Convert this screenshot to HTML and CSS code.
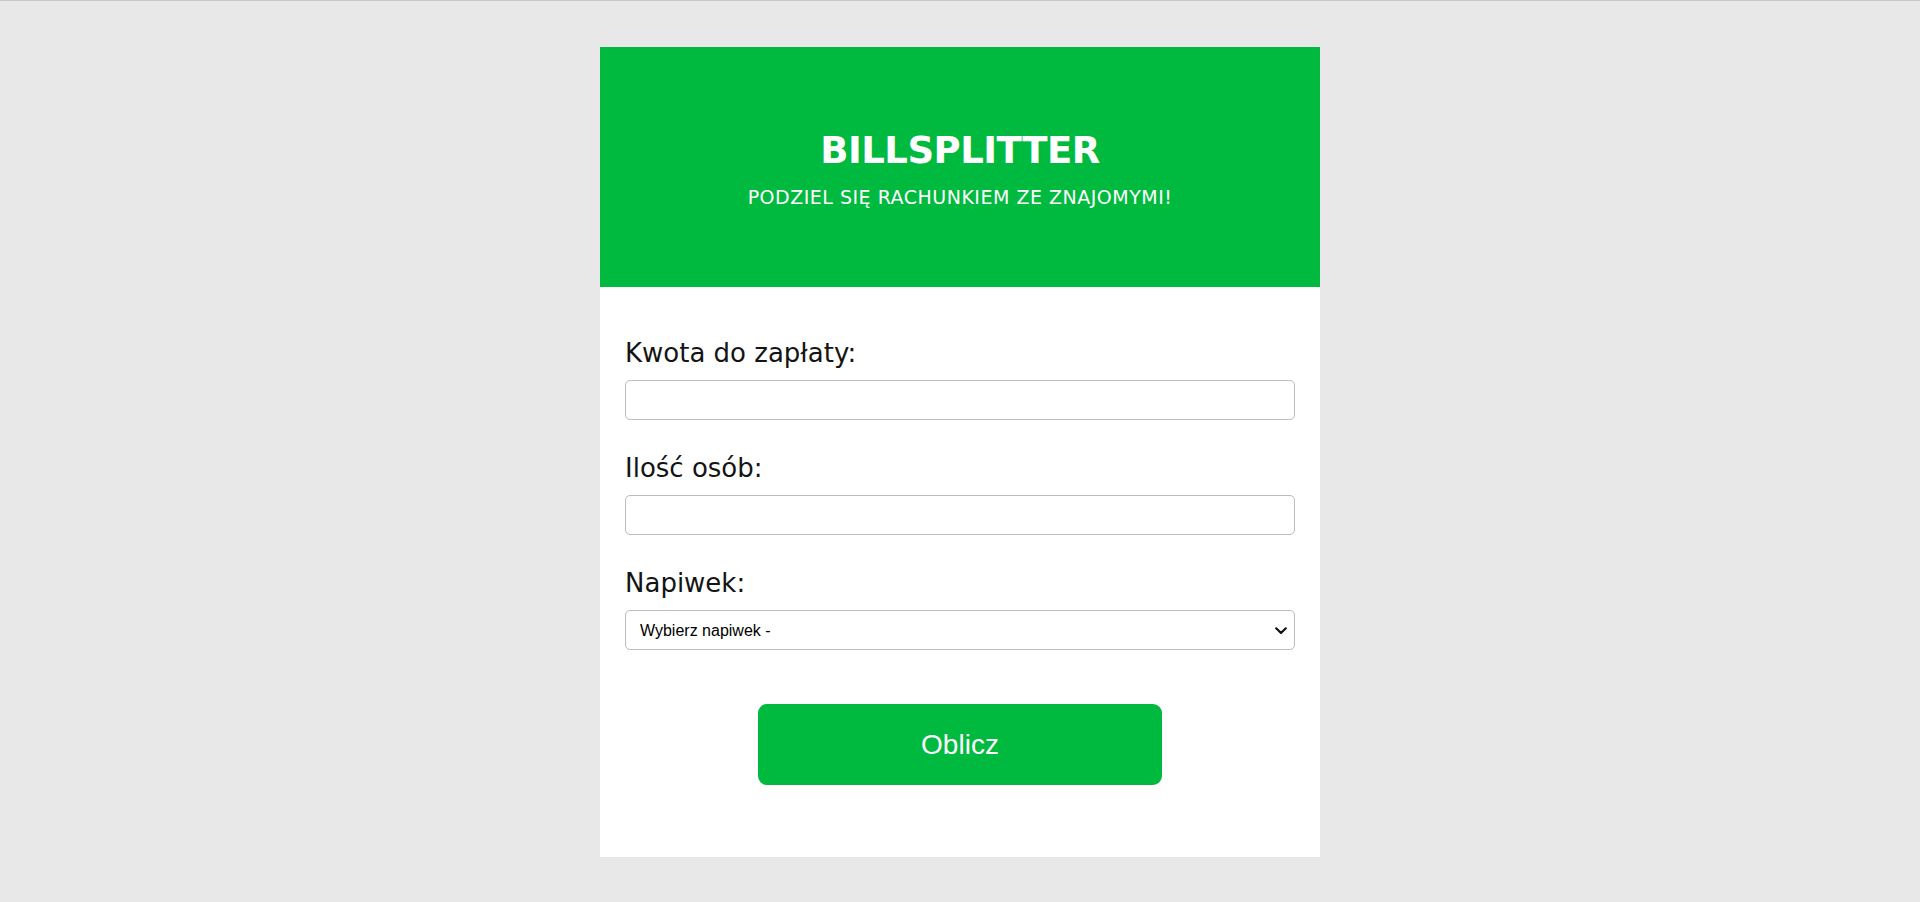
FILE: index.html
```html
<!DOCTYPE html>
<html lang="pl">
<head>
<meta charset="utf-8">
<title>Billsplitter</title>
<link rel="stylesheet" href="styles.css">
</head>
<body>
<main class="card">
  <header class="card-header">
    <h1 class="title">BILLSPLITTER</h1>
    <p class="subtitle">PODZIEL SIĘ RACHUNKIEM ZE ZNAJOMYMI!</p>
  </header>
  <form class="card-body">
    <div class="field">
      <label class="label" for="price">Kwota do zapłaty:</label>
      <input class="control" id="price" type="text">
    </div>
    <div class="field">
      <label class="label" for="people">Ilość osób:</label>
      <input class="control" id="people" type="text">
    </div>
    <div class="field">
      <label class="label" for="tip">Napiwek:</label>
      <div class="select-wrap">
        <select class="control select" id="tip">
          <option>Wybierz napiwek -</option>
          <option>5%</option>
          <option>10%</option>
          <option>15%</option>
        </select>
        <svg class="chevron" width="12" height="8" viewBox="0 0 12 8" aria-hidden="true">
          <path d="M1.2 1.3 L6 6 L10.8 1.3" fill="none" stroke="#111" stroke-width="2.2" stroke-linecap="round" stroke-linejoin="round"/>
        </svg>
      </div>
    </div>
    <div class="actions">
      <button class="btn" type="button">Oblicz</button>
    </div>
  </form>
</main>
</body>
</html>
```

FILE: styles.css
```css
* { box-sizing: border-box; }

html, body { height: 100%; }

body {
  margin: 0;
  background: #e8e8e8;
  border-top: 1px solid #c6c6c6;
  font-family: "DejaVu Sans", "Noto Sans", sans-serif;
}

.card {
  width: 720px;
  margin: 46px auto 0;
  background: #ffffff;
}

.card-header {
  height: 240px;
  padding-top: 3px;
  background: #00ba3f;
  color: #ffffff;
  display: flex;
  flex-direction: column;
  align-items: center;
  justify-content: center;
  gap: 14px;
}

.title {
  margin: 0;
  font-size: 37px;
  font-weight: 700;
  letter-spacing: -0.5px;
  line-height: normal;
}

.subtitle {
  margin: 0;
  font-size: 19px;
  letter-spacing: 0.5px;
  line-height: normal;
}

.card-body {
  padding: 50px 25px 72px;
  display: flex;
  flex-direction: column;
  gap: 32px;
}

.field {
  display: flex;
  flex-direction: column;
  gap: 11px;
}

.label {
  font-size: 26px;
  line-height: 32px;
  color: #141414;
}

.control {
  width: 100%;
  height: 40px;
  border: 1px solid #bcbcbc;
  border-radius: 5px;
  background: #ffffff;
  font-family: "Liberation Sans", Arial, sans-serif;
  font-size: 16px;
  color: #000000;
  padding: 0 12px;
}

.select-wrap {
  position: relative;
}

.select {
  display: block;
  -webkit-appearance: none;
  appearance: none;
  padding-left: 14px;
  padding-right: 30px;
}

.chevron {
  position: absolute;
  right: 8px;
  top: 17px;
  pointer-events: none;
}

.actions {
  display: flex;
  justify-content: center;
  padding-top: 22px;
}

.btn {
  width: 404px;
  height: 81px;
  border: none;
  border-radius: 9px;
  background: #00ba3f;
  color: #ffffff;
  font-family: "Liberation Sans", Arial, sans-serif;
  font-size: 28px;
  cursor: pointer;
}
```
